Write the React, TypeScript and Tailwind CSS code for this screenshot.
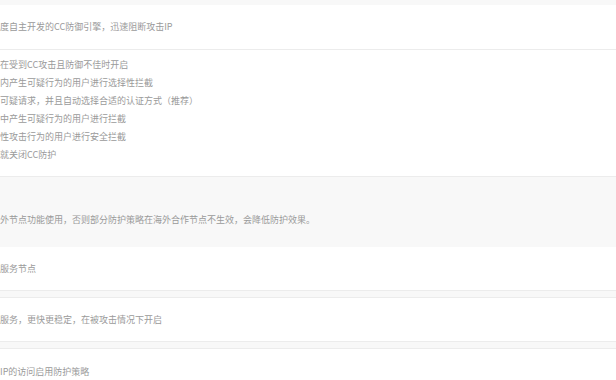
const modes = [
  '在受到CC攻击且防御不佳时开启',
  '内产生可疑行为的用户进行选择性拦截',
  '可疑请求，并且自动选择合适的认证方式（推荐）',
  '中产生可疑行为的用户进行拦截',
  '性攻击行为的用户进行安全拦截',
  '就关闭CC防护',
];

const font = { fontFamily: '"Noto Sans CJK SC", "Noto Sans", sans-serif' };

export default function App() {
  return (
    <div className="w-[616px] h-[380px] overflow-hidden bg-[#f8f8f8] text-[9px] text-[#9a9a9a]" style={font}>
      <div className="h-[5px]" />

      {/* engine intro */}
      <div className="bg-white border-b border-[#ececec] h-[45px] flex items-center">
        <span>度自主开发的CC防御引擎，迅速阻断攻击IP</span>
      </div>

      {/* protection modes */}
      <div className="bg-white border-b border-[#ececec] h-[127px] pt-[6px] flex flex-col">
        {modes.map((m) => (
          <div key={m} className="h-[18px] flex items-center">
            {m}
          </div>
        ))}
      </div>

      {/* overseas notice */}
      <div className="h-[70px] flex items-center pt-[15px]">
        外节点功能使用，否则部分防护策略在海外合作节点不生效，会降低防护效果。
      </div>

      <div className="bg-white border-b border-[#ececec] h-[44px] flex items-center">
        服务节点
      </div>

      <div className="h-[6px]" />

      <div className="bg-white border-y border-[#ececec] h-[45px] flex items-center">
        服务，更快更稳定，在被攻击情况下开启
      </div>

      <div className="h-[6px]" />

      <div className="bg-white border-t border-[#ececec] h-[60px] pt-[16px]">
        IP的访问启用防护策略
      </div>
    </div>
  );
}
